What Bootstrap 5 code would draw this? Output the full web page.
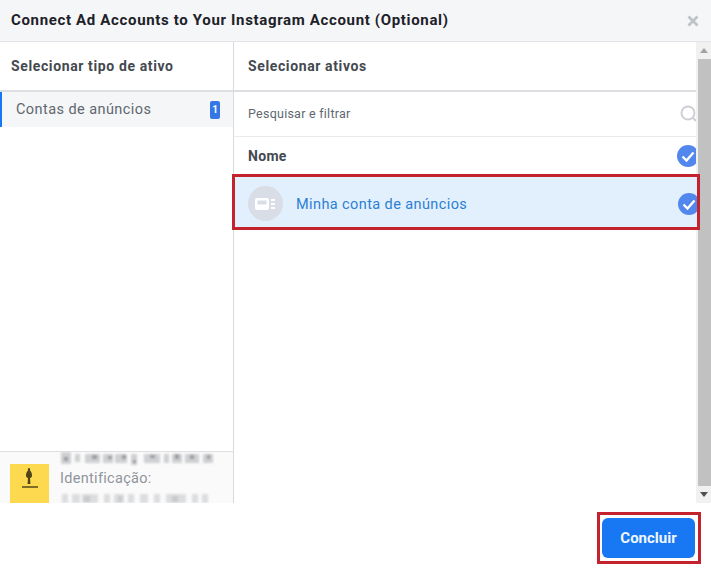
<!doctype html>
<html lang="pt"><head><meta charset="utf-8"><title>Connect Ad Accounts</title>
<link href="https://cdn.jsdelivr.net/npm/bootstrap@5.3.0/dist/css/bootstrap.min.css" rel="stylesheet">
<style>
html,body{height:100%;overflow:hidden}
body{font-family:Roboto,"Liberation Sans",sans-serif;background:#fff;color:#4b4f56;width:711px;height:569px}
.dlg{height:569px}
.dlg-head{height:42px;background:#f5f6f7;border-bottom:1px solid #e2e3e6;padding:0 11px;flex:none}
.dlg-title{font-size:15px;font-weight:700;color:#1d2129;letter-spacing:.66px;margin:0;line-height:1}
.dlg-x{width:12px;height:12px;margin-right:1px}
.dlg-body{height:461px;flex:none}
.pane-l{width:234px;border-right:1px solid #d9dbde;flex:none}
.pane-r{width:462px;flex:none;position:relative}
.pane-h{height:50px;border-bottom:2px solid #dddfe2;font-size:14px;font-weight:700;color:#444950;letter-spacing:.62px;flex:none}
.pane-l .pane-h{padding-left:11px}
.pane-r .pane-h{padding-left:14px}
.typ{height:35px;background:#f5f6f7;border-left:2px solid #1877f2;padding:0 13px 0 14px;font-size:14.5px;color:#606770;letter-spacing:.43px}
.typ-n{width:10px;height:18px;background:#3578e5;border-radius:2px;color:#fff;font-size:10px;font-weight:700;line-height:18px;text-align:center;letter-spacing:0}
.org{height:52px;background:#fafafa;border-top:1px solid #dddfe2;padding-left:10px;overflow:hidden}
.org-logo{width:39px;height:39px;background:#fdd94f;margin-right:11px}
.org-t{font-size:14.5px;color:#90949c;letter-spacing:.3px;line-height:20px;margin:3px 0 4px}
.mosaic{filter:blur(.8px)}
.srch{height:45px;border-bottom:1px solid #e9eaed;padding-left:14px;font-size:12.5px;color:#606770;letter-spacing:.25px;flex:none}
.hd-row{height:40px;padding:0 0 2px 14px;font-size:14px;font-weight:700;color:#444950;letter-spacing:.3px;flex:none}
.sel-row{height:50px;width:462px;margin-left:1px;background:#e2f0fe;padding:3px 0 0 13px;color:#2c7fd3;font-size:14.5px;letter-spacing:.4px;flex:none;outline:3px solid #c4222c;position:relative;z-index:2}
.sel-txt{padding-top:2px}
.avt{width:35px;height:35px;border-radius:50%;background:#d8dde6;margin-right:13px}
.chk{width:19px;height:22px;margin-left:auto;flex:none}
.sel-row .chk{margin-right:0}
.sbar{width:15px;background:#f1f1f1;flex:none}
.sb-end{height:17px}
.sb-th{flex:1 1 auto;background:#c1c1c1;margin-left:2px}
.dlg-foot{flex:1 1 auto;padding:9px 10px 0 0;background:#fff}
.btn-frame{border:3px solid #c4222c;padding:3px 3px 3px 2px;height:52px;width:104px;background:#fff}
.btn-done{background:#1877f2;color:#eef7ff;border:0;border-radius:6px;width:100%;height:40px;font-weight:700;font-size:15px;padding:0;font-family:Roboto,"Liberation Sans",sans-serif}
</style></head>
<body>
<div class="dlg d-flex flex-column">
  <header class="dlg-head d-flex align-items-center justify-content-between">
    <h1 class="dlg-title">Connect Ad Accounts to Your Instagram Account (Optional)</h1>
    <svg class="dlg-x" viewBox="0 0 12 12" aria-label="Fechar"><path d="M1.500 1.500l9 9M10.500 1.500l-9 9" stroke="#bec2c9" stroke-width="2.800" fill="none"/></svg>
  </header>
  <div class="dlg-body d-flex">
    <aside class="pane-l d-flex flex-column">
      <div class="pane-h d-flex align-items-center">Selecionar tipo de ativo</div>
      <div class="typ d-flex align-items-center justify-content-between"><span>Contas de anúncios</span><span class="typ-n">1</span></div>
      <div class="flex-grow-1"></div>
      <div class="org d-flex align-items-end">
        <div class="org-logo flex-shrink-0">
          <svg class="d-block" width="39" height="39" viewBox="0 0 39 39"><path d="M19 4c1.200 0 1.300 1.500 1 2.500 1.300 1 2 3 2 5 0 1.500-.8 2.300-2 2.500l.4 6h-2.800l.4-6c-1.200-.2-2-1-2-2.500 0-2 .7-4 2-5-.3-1-.2-2.500 1-2.500z" fill="#4f4417"/><rect x="12" y="22" width="16" height="2" fill="#7d6d25"/></svg>
        </div>
        <div class="d-flex flex-column align-self-start">
          <svg class="mosaic d-block" width="156" height="14" viewBox="0 0 156 14"><g fill="#cfd0d3"><rect x="1" y="0" width="10" height="12"/><rect x="15" y="2" width="5" height="8"/><rect x="25" y="2" width="15" height="9"/><rect x="43" y="2" width="10" height="9"/><rect x="55" y="2" width="12" height="9"/><rect x="71" y="2" width="6" height="11"/><rect x="84" y="2" width="16" height="9"/><rect x="104" y="2" width="5" height="9"/><rect x="112" y="2" width="10" height="9"/><rect x="125" y="2" width="14" height="9"/><rect x="143" y="2" width="10" height="9"/></g><g fill="#9a9da1"><rect x="4" y="5" width="4" height="4"/><rect x="32" y="3" width="5" height="4"/><rect x="48" y="4" width="4" height="3"/><rect x="62" y="3" width="4" height="4"/><rect x="73" y="8" width="3" height="3"/><rect x="90" y="3" width="5" height="3"/><rect x="115" y="2" width="4" height="5"/><rect x="130" y="3" width="4" height="4"/><rect x="147" y="3" width="3" height="4"/></g></svg>
          <div class="org-t">Identificação:</div>
          <svg class="mosaic d-block" width="156" height="10" viewBox="0 0 156 10"><g fill="#dcdddf"><rect x="2" y="1" width="6" height="9"/><rect x="12" y="1" width="8" height="9"/><rect x="22" y="1" width="16" height="9"/><rect x="44" y="1" width="6" height="9"/><rect x="54" y="1" width="10" height="9"/><rect x="68" y="1" width="6" height="9"/><rect x="80" y="1" width="8" height="9"/><rect x="94" y="1" width="6" height="9"/><rect x="106" y="1" width="20" height="9"/><rect x="132" y="1" width="6" height="9"/><rect x="142" y="1" width="6" height="9"/></g><g fill="#c8cacd"><rect x="24" y="3" width="6" height="6"/><rect x="58" y="3" width="4" height="6"/><rect x="112" y="3" width="6" height="6"/></g></svg>
        </div>
      </div>
    </aside>
    <main class="pane-r d-flex flex-column">
      <div class="pane-h d-flex align-items-center">Selecionar ativos</div>
      <div class="srch d-flex align-items-center justify-content-between">
        <span>Pesquisar e filtrar</span>
        <svg width="16" height="18" viewBox="0 0 16 18" class="flex-shrink-0"><circle cx="8" cy="8" r="6.500" fill="none" stroke="#ccd0d5" stroke-width="2"/><path d="M13 13l3 3" stroke="#ccd0d5" stroke-width="2"/></svg>
      </div>
      <div class="hd-row d-flex align-items-center">
        <span>Nome</span>
        <svg class="chk" viewBox="0 0 19 22"><circle cx="11" cy="11" r="11" fill="#5288ee"/><path d="M5.500 11.500l4 4 7-8" fill="none" stroke="#fff" stroke-width="2.300"/></svg>
      </div>
      <div class="sel-row d-flex align-items-center">
        <span class="avt d-flex align-items-center justify-content-center">
          <svg width="21" height="14" viewBox="0 0 21 14"><rect x="0" y="1" width="14" height="12" rx="2" fill="#fff"/><rect x="2.500" y="3.500" width="9" height="4" fill="#d8dde6"/><path d="M16 2h4v2h-4zM16 6h4v2h-4zM16 10h4v2h-4z" fill="#fff"/></svg>
        </span>
        <span class="sel-txt">Minha conta de anúncios</span>
        <svg class="chk" viewBox="0 0 19 22"><circle cx="11" cy="11" r="11" fill="#5288ee"/><path d="M5.500 11.500l4 4 7-8" fill="none" stroke="#fff" stroke-width="2.300"/></svg>
      </div>
    </main>
    <div class="sbar d-flex flex-column">
      <div class="sb-end d-flex align-items-center justify-content-center"><svg width="8" height="5" viewBox="0 0 8 5"><path d="M4 0l4 5H0z" fill="#a3a3a3"/></svg></div>
      <div class="sb-th"></div>
      <div class="sb-end d-flex align-items-center justify-content-center"><svg width="8" height="5" viewBox="0 0 8 5"><path d="M0 0h8L4 5z" fill="#505050"/></svg></div>
    </div>
  </div>
  <footer class="dlg-foot d-flex justify-content-end align-items-start">
    <div class="btn-frame"><button type="button" class="btn btn-done">Concluir</button></div>
  </footer>
</div>
<script src="https://cdn.jsdelivr.net/npm/bootstrap@5.3.0/dist/js/bootstrap.bundle.min.js"></script>
</body></html>
